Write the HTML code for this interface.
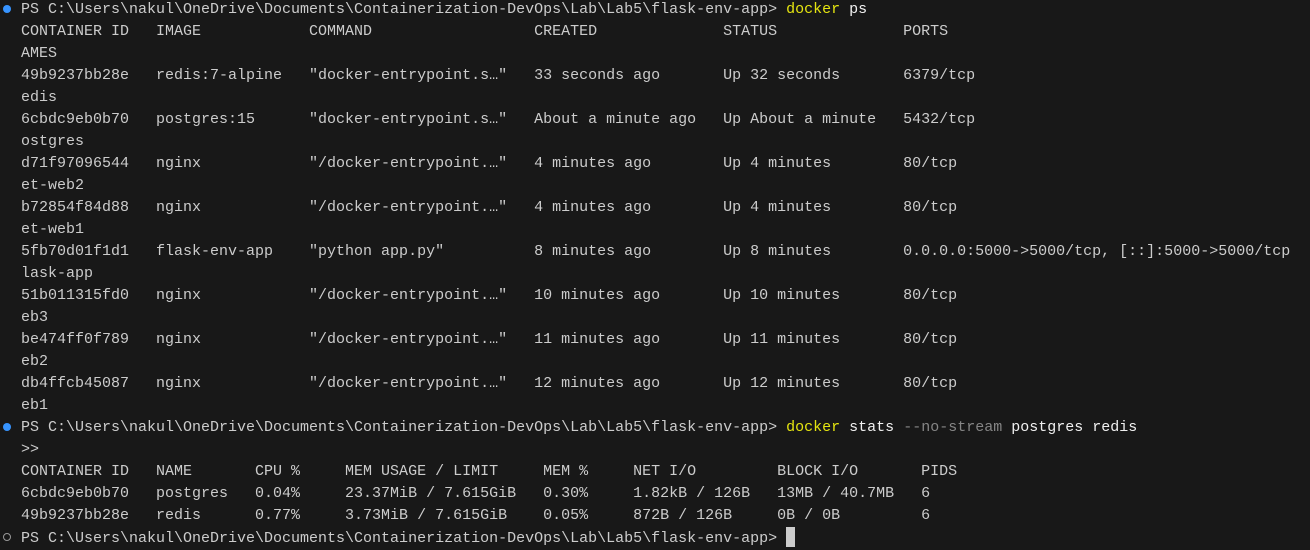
<!DOCTYPE html>
<html><head><meta charset="utf-8"><style>
html,body{margin:0;padding:0;background:#181818;width:1310px;height:547px;overflow:hidden}
pre{position:absolute;left:21px;top:-1px;margin:0;font-family:"Liberation Mono",monospace;font-size:15px;line-height:22px;color:#cccccc;white-space:pre}
.y{color:#e5e510}.w{color:#f0f0f0}.g{color:#858585}
.dot{position:absolute;left:3px;width:8px;height:8px;border-radius:50%}
.cur{display:inline-block;width:9px;height:20px;background:#cccccc;vertical-align:-5px}
</style></head><body>
<div class="dot" style="top:5px;background:#3794ff"></div>
<div class="dot" style="top:423px;background:#3794ff"></div>
<div class="dot" style="top:533px;box-sizing:border-box;border:1.5px solid #999"></div>
<pre>PS C:\Users\nakul\OneDrive\Documents\Containerization-DevOps\Lab\Lab5\flask-env-app&gt; <span class="y">docker</span> <span class="w">ps</span>
CONTAINER ID   IMAGE            COMMAND                  CREATED              STATUS              PORTS
AMES
49b9237bb28e   redis:7-alpine   "docker-entrypoint.s…"   33 seconds ago       Up 32 seconds       6379/tcp
edis
6cbdc9eb0b70   postgres:15      "docker-entrypoint.s…"   About a minute ago   Up About a minute   5432/tcp
ostgres
d71f97096544   nginx            "/docker-entrypoint.…"   4 minutes ago        Up 4 minutes        80/tcp
et-web2
b72854f84d88   nginx            "/docker-entrypoint.…"   4 minutes ago        Up 4 minutes        80/tcp
et-web1
5fb70d01f1d1   flask-env-app    "python app.py"          8 minutes ago        Up 8 minutes        0.0.0.0:5000-&gt;5000/tcp, [::]:5000-&gt;5000/tcp
lask-app
51b011315fd0   nginx            "/docker-entrypoint.…"   10 minutes ago       Up 10 minutes       80/tcp
eb3
be474ff0f789   nginx            "/docker-entrypoint.…"   11 minutes ago       Up 11 minutes       80/tcp
eb2
db4ffcb45087   nginx            "/docker-entrypoint.…"   12 minutes ago       Up 12 minutes       80/tcp
eb1
PS C:\Users\nakul\OneDrive\Documents\Containerization-DevOps\Lab\Lab5\flask-env-app&gt; <span class="y">docker</span> <span class="w">stats</span> <span class="g">--no-stream</span> <span class="w">postgres redis</span>
&gt;&gt;
CONTAINER ID   NAME       CPU %     MEM USAGE / LIMIT     MEM %     NET I/O         BLOCK I/O       PIDS
6cbdc9eb0b70   postgres   0.04%     23.37MiB / 7.615GiB   0.30%     1.82kB / 126B   13MB / 40.7MB   6
49b9237bb28e   redis      0.77%     3.73MiB / 7.615GiB    0.05%     872B / 126B     0B / 0B         6
PS C:\Users\nakul\OneDrive\Documents\Containerization-DevOps\Lab\Lab5\flask-env-app&gt; <span class="cur"></span></pre>
</body></html>
